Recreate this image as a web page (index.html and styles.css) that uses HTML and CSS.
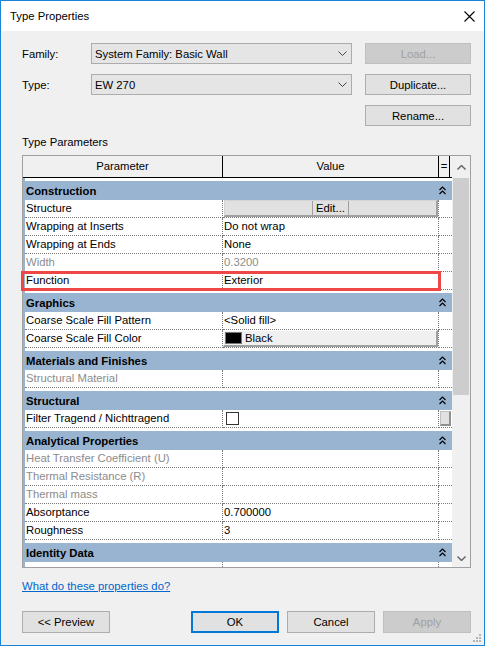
FILE: index.html
```html
<!DOCTYPE html>
<html lang="en">

<head>
    <meta charset="UTF-8">
    <meta name="viewport" content="width=device-width, initial-scale=1.0">
    <title>Type Properties</title>
    <link rel="stylesheet" href="styles.css">
</head>

<body>
    <div class="window">
        <div class="titlebar">
            <span class="title">Type Properties</span>
            <svg class="close" width="11" height="11" viewBox="0 0 11 11">
                <path d="M0.5 0.5 L10.5 10.5 M10.5 0.5 L0.5 10.5" stroke="#000" stroke-width="1.1" fill="none" />
            </svg>
        </div>

        <div class="content">
            <div class="form">
                <span class="form-label">Family:</span>
                <div class="select">
                    <span>System Family: Basic Wall</span>
                    <svg width="9" height="5" viewBox="0 0 9 5"><polyline points="0.5,0.5 4.5,4.5 8.5,0.5" stroke="#444" fill="none" /></svg>
                </div>
                <button class="btn" disabled>Load...</button>

                <span class="form-label">Type:</span>
                <div class="select">
                    <span>EW 270</span>
                    <svg width="9" height="5" viewBox="0 0 9 5"><polyline points="0.5,0.5 4.5,4.5 8.5,0.5" stroke="#444" fill="none" /></svg>
                </div>
                <button class="btn">Duplicate...</button>

                <button class="btn rename">Rename...</button>
            </div>

            <div class="section-label">Type Parameters</div>

            <div class="props">
                <div class="props-table">
                    <div class="props-head">
                        <div class="head-cell">Parameter</div>
                        <div class="head-cell">Value</div>
                        <div class="head-cell">=</div>
                        <div></div>
                    </div>

                    <div class="props-body">
                        <div class="group"><span>Construction</span><svg class="fold" width="7" height="9" viewBox="0 0 7 9"><path d="M0.5 4 L3.5 1 L6.5 4 M0.5 8 L3.5 5 L6.5 8" stroke="#000" stroke-width="1.2" fill="none" /></svg></div>
                        <div class="row">
                            <div class="cell">Structure</div>
                            <div class="cell bare"><div class="edit-btn"><span>Edit...</span></div></div>
                            <div class="cell"></div>
                        </div>
                        <div class="row">
                            <div class="cell">Wrapping at Inserts</div>
                            <div class="cell">Do not wrap</div>
                            <div class="cell"></div>
                        </div>
                        <div class="row">
                            <div class="cell">Wrapping at Ends</div>
                            <div class="cell">None</div>
                            <div class="cell"></div>
                        </div>
                        <div class="row dim">
                            <div class="cell">Width</div>
                            <div class="cell">0.3200</div>
                            <div class="cell"></div>
                        </div>
                        <div class="row marked">
                            <div class="cell">Function</div>
                            <div class="cell">Exterior</div>
                            <div class="cell"></div>
                        </div>

                        <div class="group"><span>Graphics</span><svg class="fold" width="7" height="9" viewBox="0 0 7 9"><path d="M0.5 4 L3.5 1 L6.5 4 M0.5 8 L3.5 5 L6.5 8" stroke="#000" stroke-width="1.2" fill="none" /></svg></div>
                        <div class="row">
                            <div class="cell">Coarse Scale Fill Pattern</div>
                            <div class="cell">&lt;Solid fill&gt;</div>
                            <div class="cell"></div>
                        </div>
                        <div class="row">
                            <div class="cell">Coarse Scale Fill Color</div>
                            <div class="cell bare"><div class="color-btn"><span class="swatch"></span>Black</div></div>
                            <div class="cell"></div>
                        </div>

                        <div class="group"><span>Materials and Finishes</span><svg class="fold" width="7" height="9" viewBox="0 0 7 9"><path d="M0.5 4 L3.5 1 L6.5 4 M0.5 8 L3.5 5 L6.5 8" stroke="#000" stroke-width="1.2" fill="none" /></svg></div>
                        <div class="row dim">
                            <div class="cell">Structural Material</div>
                            <div class="cell"></div>
                            <div class="cell"></div>
                        </div>

                        <div class="group"><span>Structural</span><svg class="fold" width="7" height="9" viewBox="0 0 7 9"><path d="M0.5 4 L3.5 1 L6.5 4 M0.5 8 L3.5 5 L6.5 8" stroke="#000" stroke-width="1.2" fill="none" /></svg></div>
                        <div class="row">
                            <div class="cell">Filter Tragend / Nichttragend</div>
                            <div class="cell bare"><span class="check"></span></div>
                            <div class="cell bare"><span class="mini-btn"></span></div>
                        </div>

                        <div class="group"><span>Analytical Properties</span><svg class="fold" width="7" height="9" viewBox="0 0 7 9"><path d="M0.5 4 L3.5 1 L6.5 4 M0.5 8 L3.5 5 L6.5 8" stroke="#000" stroke-width="1.2" fill="none" /></svg></div>
                        <div class="row dim">
                            <div class="cell">Heat Transfer Coefficient (U)</div>
                            <div class="cell"></div>
                            <div class="cell"></div>
                        </div>
                        <div class="row dim">
                            <div class="cell">Thermal Resistance (R)</div>
                            <div class="cell"></div>
                            <div class="cell"></div>
                        </div>
                        <div class="row dim">
                            <div class="cell">Thermal mass</div>
                            <div class="cell"></div>
                            <div class="cell"></div>
                        </div>
                        <div class="row">
                            <div class="cell">Absorptance</div>
                            <div class="cell">0.700000</div>
                            <div class="cell"></div>
                        </div>
                        <div class="row">
                            <div class="cell">Roughness</div>
                            <div class="cell">3</div>
                            <div class="cell"></div>
                        </div>

                        <div class="group"><span>Identity Data</span><svg class="fold" width="7" height="9" viewBox="0 0 7 9"><path d="M0.5 4 L3.5 1 L6.5 4 M0.5 8 L3.5 5 L6.5 8" stroke="#000" stroke-width="1.2" fill="none" /></svg></div>
                        <!-- next row is cut off by the bottom of the list -->
                        <div class="row cut">
                            <div class="cell"></div>
                            <div class="cell"></div>
                            <div class="cell"></div>
                        </div>
                    </div>
                </div>

                <div class="scrollbar">
                    <div class="sb-arrow">
                        <svg width="9" height="5" viewBox="0 0 9 5"><polyline points="0.5,4.5 4.5,0.5 8.5,4.5" stroke="#606060" stroke-width="1.4" fill="none" /></svg>
                    </div>
                    <div class="sb-thumb"></div>
                    <div class="sb-track"></div>
                    <div class="sb-arrow down">
                        <svg width="9" height="5" viewBox="0 0 9 5"><polyline points="0.5,0.5 4.5,4.5 8.5,0.5" stroke="#606060" stroke-width="1.4" fill="none" /></svg>
                    </div>
                </div>
            </div>

            <a class="help-link" href="#">What do these properties do?</a>

            <div class="footer">
                <button class="btn wide">&lt;&lt; Preview</button>
                <div class="footer-right">
                    <button class="btn wide default">OK</button>
                    <button class="btn wide">Cancel</button>
                    <button class="btn wide" disabled>Apply</button>
                </div>
            </div>
        </div>

        <svg class="grip" width="9" height="9" viewBox="0 0 9 9" fill="#b5b5b5">
            <rect x="6" y="0" width="2" height="2" />
            <rect x="3" y="3" width="2" height="2" />
            <rect x="6" y="3" width="2" height="2" />
            <rect x="0" y="6" width="2" height="2" />
            <rect x="3" y="6" width="2" height="2" />
            <rect x="6" y="6" width="2" height="2" />
        </svg>
    </div>
</body>

</html>
```

FILE: styles.css
```css
* ,
*::before,
*::after {
    box-sizing: border-box;
}

body {
    margin: 0;
    font-family: "Liberation Sans", Arial, sans-serif;
    font-size: 11.3px;
    color: #000;
}

.window {
    width: 485px;
    height: 646px;
    border: 1px solid #1883d7;
    background-color: #f0f0f0;
    display: flex;
    flex-direction: column;
    position: relative;
}

.titlebar {
    height: 30px;
    background-color: #fff;
    display: flex;
    justify-content: space-between;
    align-items: center;
    padding: 0 9px 0 9px;
}

.content {
    padding: 12px 13px 0 21px;
    display: flex;
    flex-direction: column;
}

/* family / type pickers */
.form {
    display: grid;
    grid-template-columns: 56px 261px 106px;
    grid-template-rows: 21px 21px 21px;
    column-gap: 13px;
    row-gap: 10px;
    align-items: center;
}

.select {
    height: 21px;
    border: 1px solid #acacac;
    background-color: #e5e5e5;
    display: flex;
    justify-content: space-between;
    align-items: center;
    padding: 0 4px 0 3px;
}

.btn {
    font-family: inherit;
    font-size: inherit;
    color: #000;
    height: 21px;
    border: 1px solid #adadad;
    background-color: #e1e1e1;
    padding: 0;
}

.btn:disabled {
    background-color: #cccccc;
    border-color: #bfbfbf;
    color: #a0a0a0;
}

.rename {
    grid-column: 3;
}

.section-label {
    line-height: 14px;
    margin: 9px 0 6px 0;
}

/* parameter list */
.props {
    height: 413px;
    border: 1px solid #a0a0a0;
    display: flex;
}

.props-table {
    width: 429px;
    display: flex;
    flex-direction: column;
}

.props-head {
    height: 22px;
    display: grid;
    grid-template-columns: 200px 216px 11px 2px;
    border-bottom: 1px solid #000;
    background-color: #f0f0f0;
}

.head-cell {
    border-right: 1px solid #000;
    text-align: center;
    line-height: 21px;
}

.props-body {
    flex: 1;
    background-color: #99b4d1;
}

.group {
    height: 22px;
    margin-left: 2px;
    border-top: 3px solid #fff;
    background-color: #99b4d1;
    font-weight: bold;
    display: flex;
    justify-content: space-between;
    align-items: center;
    padding: 0 6px 0 1px;
}

.row {
    height: 18px;
    margin-left: 2px;
    display: grid;
    grid-template-columns: 198px 216px 13px;
    background-color: #fff;
}

.cell {
    border-right: 1px dotted #7a7a7a;
    border-bottom: 1px dotted #7a7a7a;
    line-height: 17px;
    padding-left: 1px;
    white-space: nowrap;
    overflow: hidden;
}

.cell:last-child {
    border-right: none;
}

.cell.bare {
    padding: 0;
}

.row.dim {
    color: #8c8c8c;
}

.row.cut {
    height: 5px;
}

.row.cut .cell {
    border-bottom: none;
}

.row.marked {
    position: relative;
}

/* red annotation frame */
.row.marked::after {
    content: "";
    position: absolute;
    left: -4px;
    right: 11px;
    top: -1px;
    bottom: -1px;
    border: 3px solid #ef4646;
}

.edit-btn {
    height: 17px;
    width: 214px;
    margin-left: 1px;
    background-color: #e1e1e1;
    border-top: 1px solid #d4d4d4;
    border-left: 1px solid #d4d4d4;
    border-right: 2px solid #a0a0a0;
    border-bottom: 2px solid #a0a0a0;
    display: flex;
    justify-content: center;
    align-items: center;
}

.edit-btn span {
    border-left: 1px solid #a0a0a0;
    border-right: 1px solid #a0a0a0;
    padding: 0 3px;
    line-height: 14px;
}

.color-btn {
    height: 17px;
    width: 215px;
    background-color: #f0f0f0;
    border-top: 1px solid #fff;
    border-left: 1px solid #fff;
    border-right: 2px solid #a0a0a0;
    border-bottom: 2px solid #a0a0a0;
    display: flex;
    align-items: center;
    padding-left: 1px;
}

.swatch {
    width: 17px;
    height: 12px;
    background-color: #000;
    border: 1px solid #777;
    margin-right: 3px;
}

.check {
    display: block;
    width: 13px;
    height: 13px;
    border: 1px solid #333;
    background-color: #fff;
    margin: 2px 0 0 3px;
}

.mini-btn {
    display: block;
    width: 11px;
    height: 15px;
    margin: 1px 0 0 1px;
    background-color: #e1e1e1;
    border: 1px solid #c0c0c0;
    border-right: 2px solid #909090;
    border-bottom: 2px solid #909090;
}

.scrollbar {
    width: 18px;
    display: flex;
    flex-direction: column;
    background-color: #f0f0f0;
}

.sb-arrow {
    height: 22px;
    display: flex;
    justify-content: center;
    align-items: center;
}

.sb-arrow.down {
    height: 17px;
}

.sb-thumb {
    height: 217px;
    margin: 0 1px;
    background-color: #cdcdcd;
}

.sb-track {
    flex: 1;
}

.help-link {
    margin-top: 11px;
    line-height: 14px;
    color: #0066cc;
    align-self: flex-start;
}

.footer {
    margin-top: 18px;
    display: flex;
    justify-content: space-between;
}

.footer-right {
    display: flex;
    gap: 8px;
}

.btn.wide {
    width: 88px;
    height: 22px;
}

.btn.default {
    border: 2px solid #0078d7;
}

.grip {
    position: absolute;
    right: 2px;
    bottom: 2px;
}
```
